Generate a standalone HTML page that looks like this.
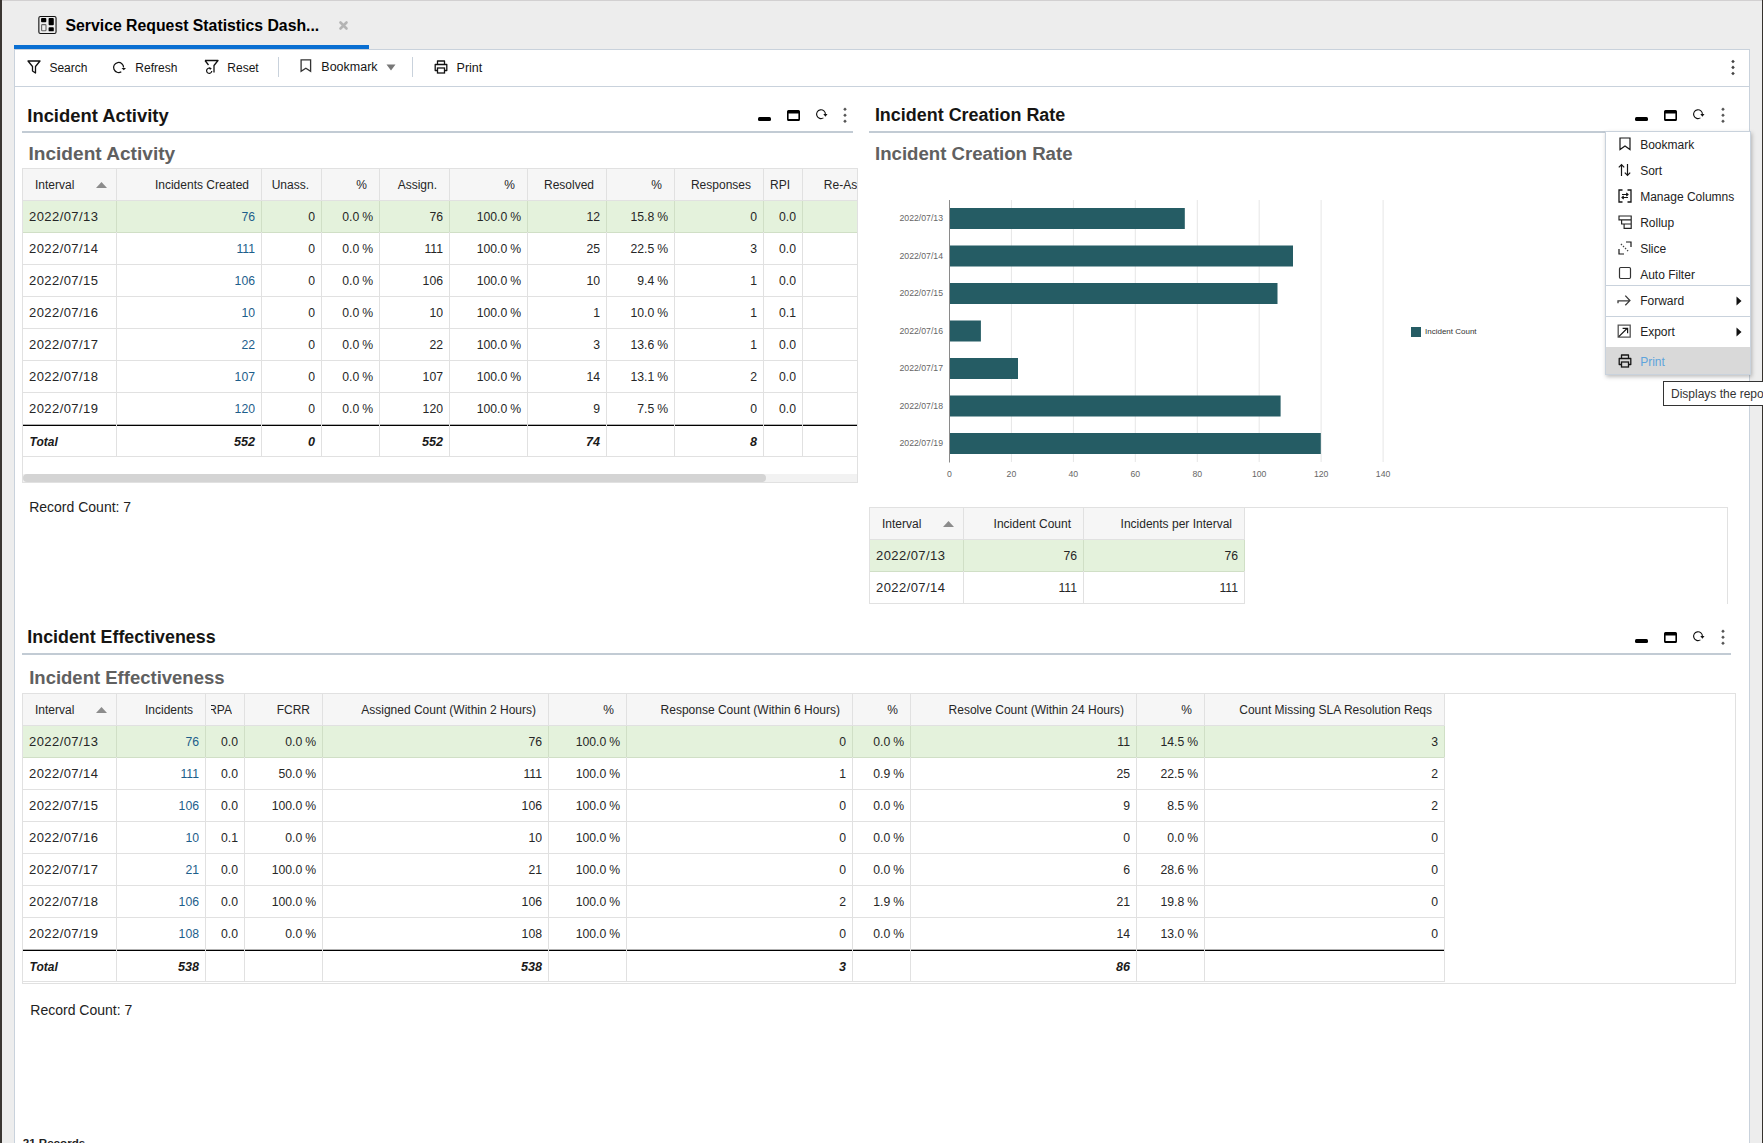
<!DOCTYPE html><html><head><meta charset="utf-8"><title>Service Request Statistics Dashboard</title><style>
html,body{margin:0;padding:0;}body{width:1763px;height:1143px;overflow:hidden;position:relative;background:#ededed;font-family:"Liberation Sans",sans-serif;}
.t{position:absolute;white-space:nowrap;}.r{position:absolute;}svg{position:absolute;overflow:visible;}
</style></head><body>
<div class="r" style="left:0px;top:0px;width:1763px;height:1px;background:#d2d0d1;"></div>
<div class="r" style="left:0px;top:0px;width:2px;height:1143px;background:#3a3632;"></div>
<div class="r" style="left:1762px;top:0px;width:1px;height:1143px;background:#36322e;"></div>
<svg style="left:38px;top:16px" width="20" height="19" viewBox="0 0 20 19"><rect x="0.85" y="0.5" width="17.2" height="17" rx="1.6" fill="none" stroke="#111" stroke-width="1.1"/><rect x="3.05" y="2.1" width="5.25" height="4.1" rx="0.9" fill="#000"/><rect x="10.6" y="2.1" width="5.2" height="7.1" rx="0.9" fill="#000"/><rect x="3.6" y="8.6" width="4.4" height="6.2" rx="0.8" fill="none" stroke="#666" stroke-width="1.1"/><rect x="10.6" y="11.2" width="5.2" height="4.1" rx="0.9" fill="#000"/></svg>
<div class="t" style="left:65.5px;top:16.65px;font-size:15.8px;line-height:18.96px;font-weight:bold;color:#000;font-style:normal;">Service Request Statistics Dash...</div>
<svg style="left:338.5px;top:20.5px" width="9" height="9" viewBox="0 0 9 9"><path d="M1.5 1.5L7.5 7.5M7.5 1.5L1.5 7.5" stroke="#b4b4b4" stroke-width="2.6" stroke-linecap="round"/></svg>
<div class="r" style="left:14px;top:45px;width:355px;height:4px;background:#0a6fd2;"></div>
<div class="r" style="left:14px;top:49px;width:1736px;height:1094px;background:#fff;box-sizing:border-box;border:1px solid #c9d2dc;border-bottom:none;"></div>
<div class="r" style="left:15px;top:86px;width:1734px;height:1px;background:#c9d2dc;"></div>
<svg style="left:27px;top:60px" width="14" height="14" viewBox="0 0 14 14"><path d="M1 1H13L8.5 6.5V13L5.5 11V6.5Z" fill="none" stroke="#111" stroke-width="1.3" stroke-linejoin="round"/></svg>
<div class="t" style="left:49.4px;top:60.54px;font-size:12px;line-height:14.4px;font-weight:normal;color:#161616;font-style:normal;">Search</div>
<svg style="left:108px;top:55px" width="24" height="24" viewBox="0 0 24 24"><path d="M15.6 12.6A5 5 0 1 0 13.3 16.7" fill="none" stroke="#111" stroke-width="1.25"/><path d="M13.5 12.9L18 12.9L15.8 15.3Z" fill="#111"/></svg>
<div class="t" style="left:135.3px;top:60.54px;font-size:12px;line-height:14.4px;font-weight:normal;color:#161616;font-style:normal;">Refresh</div>
<svg style="left:204px;top:59px" width="15" height="15" viewBox="0 0 15 15"><path d="M1 1.5H14L10 6.5V13.5M1 1.5L4.5 6" fill="none" stroke="#111" stroke-width="1.3" stroke-linejoin="round"/><path d="M6.5 9.5A2.6 2.6 0 1 0 7.8 12" fill="none" stroke="#111" stroke-width="1.2"/><path d="M5 8.2L7.8 9.3L6 11Z" fill="#111"/></svg>
<div class="t" style="left:227.3px;top:60.54px;font-size:12px;line-height:14.4px;font-weight:normal;color:#161616;font-style:normal;">Reset</div>
<div class="r" style="left:278px;top:57px;width:1px;height:20px;background:#c9d2dc;"></div>
<svg style="left:300px;top:59px" width="12" height="14" viewBox="0 0 12 14"><path d="M1.1 0.9H10.6V12.4L5.85 9.3L1.1 12.4Z" fill="none" stroke="#333" stroke-width="1.3" stroke-linejoin="miter"/></svg>
<div class="t" style="left:321.3px;top:59.67px;font-size:12.5px;line-height:15.0px;font-weight:normal;color:#161616;font-style:normal;">Bookmark</div>
<svg style="left:386px;top:63.7px" width="10" height="7" viewBox="0 0 10 7"><path d="M0.5 0.5H9.5L5 6.5Z" fill="#777"/></svg>
<div class="r" style="left:412px;top:57px;width:1px;height:20px;background:#c9d2dc;"></div>
<svg style="left:434px;top:60px" width="14" height="14" viewBox="0 0 14 14"><path d="M3.5 4.5V1H10.5V4.5M3.5 10.5H1.2V4.5H12.8V10.5H10.5" fill="none" stroke="#111" stroke-width="1.3" stroke-linejoin="round"/><rect x="3.5" y="8" width="7" height="5" fill="none" stroke="#111" stroke-width="1.3"/></svg>
<div class="t" style="left:456.6px;top:60.77px;font-size:12.5px;line-height:15.0px;font-weight:normal;color:#161616;font-style:normal;">Print</div>
<svg style="left:1730.1px;top:55px" width="6" height="24" viewBox="0 0 6 24"><path d="M3 4.70L4.8 6.50L3 8.30L1.2 6.50ZM3 10.60L4.8 12.40L3 14.20L1.2 12.40ZM3 16.70L4.8 18.50L3 20.30L1.2 18.50Z" fill="#444"/></svg>
<div class="t" style="left:27.3px;top:104.88px;font-size:18.4px;line-height:22.08px;font-weight:bold;color:#161513;font-style:normal;">Incident Activity</div>
<div class="r" style="left:22px;top:131px;width:831px;height:2px;background:#c2cbd4;"></div>
<div class="t" style="left:874.9px;top:105.32px;font-size:17.94px;line-height:21.53px;font-weight:bold;color:#161513;font-style:normal;">Incident Creation Rate</div>
<div class="r" style="left:869px;top:131px;width:862px;height:2px;background:#c2cbd4;"></div>
<div class="t" style="left:27.3px;top:627.42px;font-size:17.83px;line-height:21.4px;font-weight:bold;color:#161513;font-style:normal;">Incident Effectiveness</div>
<div class="r" style="left:22px;top:653px;width:1709px;height:2px;background:#c2cbd4;"></div>
<div class="r" style="left:757.8px;top:117px;width:13px;height:4px;background:#000;border-radius:1.5px;"></div>
<svg style="left:786.7px;top:110px" width="13" height="11" viewBox="0 0 13 11"><rect x="0.8" y="0.9" width="11.4" height="9.2" rx="0.8" fill="none" stroke="#000" stroke-width="1.6"/><rect x="0.5" y="8.9" width="12" height="2" rx="0.8" fill="#000"/><rect x="0.5" y="0.5" width="12" height="3" rx="1" fill="#000"/></svg>
<svg style="left:810.8px;top:103.6px" width="20" height="20" viewBox="0 0 20 20"><path d="M14.4 10.4A4.4 4.4 0 1 0 12.4 13.9" fill="none" stroke="#111" stroke-width="1.1"/><path d="M12.3 10.1L16.5 10.1L14.4 12.7Z" fill="#111"/></svg>
<svg style="left:842px;top:105px" width="6" height="20" viewBox="0 0 6 20"><path d="M3 2.40L4.8 4.20L3 6.00L1.2 4.20ZM3 8.50L4.8 10.30L3 12.10L1.2 10.30ZM3 14.50L4.8 16.30L3 18.10L1.2 16.30Z" fill="#555"/></svg>
<div class="r" style="left:1635.3px;top:117px;width:13px;height:4px;background:#000;border-radius:1.5px;"></div>
<svg style="left:1664.0px;top:110px" width="13" height="11" viewBox="0 0 13 11"><rect x="0.8" y="0.9" width="11.4" height="9.2" rx="0.8" fill="none" stroke="#000" stroke-width="1.6"/><rect x="0.5" y="8.9" width="12" height="2" rx="0.8" fill="#000"/><rect x="0.5" y="0.5" width="12" height="3" rx="1" fill="#000"/></svg>
<svg style="left:1688px;top:103.6px" width="20" height="20" viewBox="0 0 20 20"><path d="M14.4 10.4A4.4 4.4 0 1 0 12.4 13.9" fill="none" stroke="#111" stroke-width="1.1"/><path d="M12.3 10.1L16.5 10.1L14.4 12.7Z" fill="#111"/></svg>
<svg style="left:1720px;top:105px" width="6" height="20" viewBox="0 0 6 20"><path d="M3 2.40L4.8 4.20L3 6.00L1.2 4.20ZM3 8.50L4.8 10.30L3 12.10L1.2 10.30ZM3 14.50L4.8 16.30L3 18.10L1.2 16.30Z" fill="#555"/></svg>
<div class="r" style="left:1635.3px;top:639px;width:13px;height:4px;background:#000;border-radius:1.5px;"></div>
<svg style="left:1664.0px;top:632px" width="13" height="11" viewBox="0 0 13 11"><rect x="0.8" y="0.9" width="11.4" height="9.2" rx="0.8" fill="none" stroke="#000" stroke-width="1.6"/><rect x="0.5" y="8.9" width="12" height="2" rx="0.8" fill="#000"/><rect x="0.5" y="0.5" width="12" height="3" rx="1" fill="#000"/></svg>
<svg style="left:1688px;top:625.6px" width="20" height="20" viewBox="0 0 20 20"><path d="M14.4 10.4A4.4 4.4 0 1 0 12.4 13.9" fill="none" stroke="#111" stroke-width="1.1"/><path d="M12.3 10.1L16.5 10.1L14.4 12.7Z" fill="#111"/></svg>
<svg style="left:1720px;top:627px" width="6" height="20" viewBox="0 0 6 20"><path d="M3 2.40L4.8 4.20L3 6.00L1.2 4.20ZM3 8.50L4.8 10.30L3 12.10L1.2 10.30ZM3 14.50L4.8 16.30L3 18.10L1.2 16.30Z" fill="#555"/></svg>
<div class="t" style="left:28.5px;top:142.84px;font-size:19.08px;line-height:22.9px;font-weight:bold;color:#606060;font-style:normal;">Incident Activity</div>
<div class="t" style="left:875px;top:143.26px;font-size:18.63px;line-height:22.36px;font-weight:bold;color:#606060;font-style:normal;">Incident Creation Rate</div>
<div class="t" style="left:29.2px;top:667.39px;font-size:18.5px;line-height:22.2px;font-weight:bold;color:#606060;font-style:normal;">Incident Effectiveness</div>
<div class="r" style="left:22px;top:168px;width:836px;height:315px;overflow:hidden;">
<div class="r" style="left:0px;top:0px;width:836px;height:32px;background:#f6f6f6;"></div>
<div class="r" style="left:0px;top:0px;width:836px;height:1px;background:#e1e1e1;"></div>
<div class="r" style="left:0px;top:32px;width:836px;height:1px;background:#e1e1e1;"></div>
<div class="r" style="left:0px;top:33px;width:935px;height:31px;background:#e4f2dc;"></div>
<div class="r" style="left:0px;top:64px;width:936px;height:1px;background:#d0dfc6;"></div>
<div class="r" style="left:0px;top:96px;width:936px;height:1px;background:#e1e1e1;"></div>
<div class="r" style="left:0px;top:128px;width:936px;height:1px;background:#e1e1e1;"></div>
<div class="r" style="left:0px;top:160px;width:936px;height:1px;background:#e1e1e1;"></div>
<div class="r" style="left:0px;top:192px;width:936px;height:1px;background:#e1e1e1;"></div>
<div class="r" style="left:0px;top:224px;width:936px;height:1px;background:#e1e1e1;"></div>
<div class="r" style="left:0px;top:256px;width:936px;height:1px;background:rgba(0,0,0,0.3);"></div>
<div class="r" style="left:0px;top:257px;width:936px;height:1px;background:#000;"></div>
<div class="r" style="left:0px;top:288px;width:936px;height:1px;background:#e1e1e1;"></div>
<div class="r" style="left:94px;top:0px;width:1px;height:289px;background:#e1e1e1;"></div>
<div class="r" style="left:239px;top:0px;width:1px;height:289px;background:#e1e1e1;"></div>
<div class="r" style="left:299px;top:0px;width:1px;height:289px;background:#e1e1e1;"></div>
<div class="r" style="left:357px;top:0px;width:1px;height:289px;background:#e1e1e1;"></div>
<div class="r" style="left:427px;top:0px;width:1px;height:289px;background:#e1e1e1;"></div>
<div class="r" style="left:505px;top:0px;width:1px;height:289px;background:#e1e1e1;"></div>
<div class="r" style="left:584px;top:0px;width:1px;height:289px;background:#e1e1e1;"></div>
<div class="r" style="left:652px;top:0px;width:1px;height:289px;background:#e1e1e1;"></div>
<div class="r" style="left:741px;top:0px;width:1px;height:289px;background:#e1e1e1;"></div>
<div class="r" style="left:780px;top:0px;width:1px;height:289px;background:#e1e1e1;"></div>
<div class="r" style="left:935px;top:0px;width:1px;height:289px;background:#e1e1e1;"></div>
<div class="r" style="left:94px;top:33px;width:1px;height:31px;background:#d0dfc6;"></div>
<div class="r" style="left:239px;top:33px;width:1px;height:31px;background:#d0dfc6;"></div>
<div class="r" style="left:299px;top:33px;width:1px;height:31px;background:#d0dfc6;"></div>
<div class="r" style="left:357px;top:33px;width:1px;height:31px;background:#d0dfc6;"></div>
<div class="r" style="left:427px;top:33px;width:1px;height:31px;background:#d0dfc6;"></div>
<div class="r" style="left:505px;top:33px;width:1px;height:31px;background:#d0dfc6;"></div>
<div class="r" style="left:584px;top:33px;width:1px;height:31px;background:#d0dfc6;"></div>
<div class="r" style="left:652px;top:33px;width:1px;height:31px;background:#d0dfc6;"></div>
<div class="r" style="left:741px;top:33px;width:1px;height:31px;background:#d0dfc6;"></div>
<div class="r" style="left:780px;top:33px;width:1px;height:31px;background:#d0dfc6;"></div>
<div class="r" style="left:935px;top:33px;width:1px;height:31px;background:#d0dfc6;"></div>
<div class="r" style="left:0px;top:0px;width:1px;height:315px;background:#e1e1e1;"></div>
<div class="t" style="left:13px;top:10.14px;font-size:12px;line-height:14.4px;font-weight:normal;color:#262626;font-style:normal;">Interval</div>
<div class="t" style="left:-173px;width:400px;text-align:right;top:10.14px;font-size:12px;line-height:14.4px;font-weight:normal;color:#262626;font-style:normal;transform-origin:100% 50%;">Incidents Created</div>
<div class="t" style="left:-113px;width:400px;text-align:right;top:10.14px;font-size:12px;line-height:14.4px;font-weight:normal;color:#262626;font-style:normal;transform-origin:100% 50%;">Unass.</div>
<div class="t" style="left:-55px;width:400px;text-align:right;top:10.14px;font-size:12px;line-height:14.4px;font-weight:normal;color:#262626;font-style:normal;transform-origin:100% 50%;">%</div>
<div class="t" style="left:15px;width:400px;text-align:right;top:10.14px;font-size:12px;line-height:14.4px;font-weight:normal;color:#262626;font-style:normal;transform-origin:100% 50%;">Assign.</div>
<div class="t" style="left:93px;width:400px;text-align:right;top:10.14px;font-size:12px;line-height:14.4px;font-weight:normal;color:#262626;font-style:normal;transform-origin:100% 50%;">%</div>
<div class="t" style="left:172px;width:400px;text-align:right;top:10.14px;font-size:12px;line-height:14.4px;font-weight:normal;color:#262626;font-style:normal;transform-origin:100% 50%;">Resolved</div>
<div class="t" style="left:240px;width:400px;text-align:right;top:10.14px;font-size:12px;line-height:14.4px;font-weight:normal;color:#262626;font-style:normal;transform-origin:100% 50%;">%</div>
<div class="t" style="left:329px;width:400px;text-align:right;top:10.14px;font-size:12px;line-height:14.4px;font-weight:normal;color:#262626;font-style:normal;transform-origin:100% 50%;">Responses</div>
<div class="t" style="left:368px;width:400px;text-align:right;top:10.14px;font-size:12px;line-height:14.4px;font-weight:normal;color:#262626;font-style:normal;transform-origin:100% 50%;">RPI</div>
<div class="t" style="left:801.8px;top:10.14px;font-size:12px;line-height:14.4px;font-weight:normal;color:#262626;font-style:normal;">Re-Assigned</div>
<svg style="left:74px;top:13.8px" width="11" height="6" viewBox="0 0 11 6"><path d="M0 6L5.5 0L11 6Z" fill="#8c8c8c"/></svg>
<div class="t" style="left:7px;top:41.30px;font-size:13px;line-height:15.6px;font-weight:normal;color:#262626;font-style:normal;letter-spacing:0.43px">2022/07/13</div>
<div class="t" style="left:-167px;width:400px;text-align:right;top:41.30px;font-size:13px;line-height:15.6px;font-weight:normal;color:#1d5e8b;font-style:normal;transform-origin:100% 50%;transform:scaleX(0.94)">76</div>
<div class="t" style="left:-107px;width:400px;text-align:right;top:41.30px;font-size:13px;line-height:15.6px;font-weight:normal;color:#262626;font-style:normal;transform-origin:100% 50%;transform:scaleX(0.94)">0</div>
<div class="t" style="left:-49px;width:400px;text-align:right;top:41.30px;font-size:13px;line-height:15.6px;font-weight:normal;color:#262626;font-style:normal;transform-origin:100% 50%;transform:scaleX(0.94)">0.0<span style="margin-left:3px">%</span></div>
<div class="t" style="left:21px;width:400px;text-align:right;top:41.30px;font-size:13px;line-height:15.6px;font-weight:normal;color:#262626;font-style:normal;transform-origin:100% 50%;transform:scaleX(0.94)">76</div>
<div class="t" style="left:99px;width:400px;text-align:right;top:41.30px;font-size:13px;line-height:15.6px;font-weight:normal;color:#262626;font-style:normal;transform-origin:100% 50%;transform:scaleX(0.94)">100.0<span style="margin-left:3px">%</span></div>
<div class="t" style="left:178px;width:400px;text-align:right;top:41.30px;font-size:13px;line-height:15.6px;font-weight:normal;color:#262626;font-style:normal;transform-origin:100% 50%;transform:scaleX(0.94)">12</div>
<div class="t" style="left:246px;width:400px;text-align:right;top:41.30px;font-size:13px;line-height:15.6px;font-weight:normal;color:#262626;font-style:normal;transform-origin:100% 50%;transform:scaleX(0.94)">15.8<span style="margin-left:3px">%</span></div>
<div class="t" style="left:335px;width:400px;text-align:right;top:41.30px;font-size:13px;line-height:15.6px;font-weight:normal;color:#262626;font-style:normal;transform-origin:100% 50%;transform:scaleX(0.94)">0</div>
<div class="t" style="left:374px;width:400px;text-align:right;top:41.30px;font-size:13px;line-height:15.6px;font-weight:normal;color:#262626;font-style:normal;transform-origin:100% 50%;transform:scaleX(0.94)">0.0</div>
<div class="t" style="left:7px;top:73.30px;font-size:13px;line-height:15.6px;font-weight:normal;color:#262626;font-style:normal;letter-spacing:0.43px">2022/07/14</div>
<div class="t" style="left:-167px;width:400px;text-align:right;top:73.30px;font-size:13px;line-height:15.6px;font-weight:normal;color:#1d5e8b;font-style:normal;transform-origin:100% 50%;transform:scaleX(0.94)">111</div>
<div class="t" style="left:-107px;width:400px;text-align:right;top:73.30px;font-size:13px;line-height:15.6px;font-weight:normal;color:#262626;font-style:normal;transform-origin:100% 50%;transform:scaleX(0.94)">0</div>
<div class="t" style="left:-49px;width:400px;text-align:right;top:73.30px;font-size:13px;line-height:15.6px;font-weight:normal;color:#262626;font-style:normal;transform-origin:100% 50%;transform:scaleX(0.94)">0.0<span style="margin-left:3px">%</span></div>
<div class="t" style="left:21px;width:400px;text-align:right;top:73.30px;font-size:13px;line-height:15.6px;font-weight:normal;color:#262626;font-style:normal;transform-origin:100% 50%;transform:scaleX(0.94)">111</div>
<div class="t" style="left:99px;width:400px;text-align:right;top:73.30px;font-size:13px;line-height:15.6px;font-weight:normal;color:#262626;font-style:normal;transform-origin:100% 50%;transform:scaleX(0.94)">100.0<span style="margin-left:3px">%</span></div>
<div class="t" style="left:178px;width:400px;text-align:right;top:73.30px;font-size:13px;line-height:15.6px;font-weight:normal;color:#262626;font-style:normal;transform-origin:100% 50%;transform:scaleX(0.94)">25</div>
<div class="t" style="left:246px;width:400px;text-align:right;top:73.30px;font-size:13px;line-height:15.6px;font-weight:normal;color:#262626;font-style:normal;transform-origin:100% 50%;transform:scaleX(0.94)">22.5<span style="margin-left:3px">%</span></div>
<div class="t" style="left:335px;width:400px;text-align:right;top:73.30px;font-size:13px;line-height:15.6px;font-weight:normal;color:#262626;font-style:normal;transform-origin:100% 50%;transform:scaleX(0.94)">3</div>
<div class="t" style="left:374px;width:400px;text-align:right;top:73.30px;font-size:13px;line-height:15.6px;font-weight:normal;color:#262626;font-style:normal;transform-origin:100% 50%;transform:scaleX(0.94)">0.0</div>
<div class="t" style="left:7px;top:105.30px;font-size:13px;line-height:15.6px;font-weight:normal;color:#262626;font-style:normal;letter-spacing:0.43px">2022/07/15</div>
<div class="t" style="left:-167px;width:400px;text-align:right;top:105.30px;font-size:13px;line-height:15.6px;font-weight:normal;color:#1d5e8b;font-style:normal;transform-origin:100% 50%;transform:scaleX(0.94)">106</div>
<div class="t" style="left:-107px;width:400px;text-align:right;top:105.30px;font-size:13px;line-height:15.6px;font-weight:normal;color:#262626;font-style:normal;transform-origin:100% 50%;transform:scaleX(0.94)">0</div>
<div class="t" style="left:-49px;width:400px;text-align:right;top:105.30px;font-size:13px;line-height:15.6px;font-weight:normal;color:#262626;font-style:normal;transform-origin:100% 50%;transform:scaleX(0.94)">0.0<span style="margin-left:3px">%</span></div>
<div class="t" style="left:21px;width:400px;text-align:right;top:105.30px;font-size:13px;line-height:15.6px;font-weight:normal;color:#262626;font-style:normal;transform-origin:100% 50%;transform:scaleX(0.94)">106</div>
<div class="t" style="left:99px;width:400px;text-align:right;top:105.30px;font-size:13px;line-height:15.6px;font-weight:normal;color:#262626;font-style:normal;transform-origin:100% 50%;transform:scaleX(0.94)">100.0<span style="margin-left:3px">%</span></div>
<div class="t" style="left:178px;width:400px;text-align:right;top:105.30px;font-size:13px;line-height:15.6px;font-weight:normal;color:#262626;font-style:normal;transform-origin:100% 50%;transform:scaleX(0.94)">10</div>
<div class="t" style="left:246px;width:400px;text-align:right;top:105.30px;font-size:13px;line-height:15.6px;font-weight:normal;color:#262626;font-style:normal;transform-origin:100% 50%;transform:scaleX(0.94)">9.4<span style="margin-left:3px">%</span></div>
<div class="t" style="left:335px;width:400px;text-align:right;top:105.30px;font-size:13px;line-height:15.6px;font-weight:normal;color:#262626;font-style:normal;transform-origin:100% 50%;transform:scaleX(0.94)">1</div>
<div class="t" style="left:374px;width:400px;text-align:right;top:105.30px;font-size:13px;line-height:15.6px;font-weight:normal;color:#262626;font-style:normal;transform-origin:100% 50%;transform:scaleX(0.94)">0.0</div>
<div class="t" style="left:7px;top:137.30px;font-size:13px;line-height:15.6px;font-weight:normal;color:#262626;font-style:normal;letter-spacing:0.43px">2022/07/16</div>
<div class="t" style="left:-167px;width:400px;text-align:right;top:137.30px;font-size:13px;line-height:15.6px;font-weight:normal;color:#1d5e8b;font-style:normal;transform-origin:100% 50%;transform:scaleX(0.94)">10</div>
<div class="t" style="left:-107px;width:400px;text-align:right;top:137.30px;font-size:13px;line-height:15.6px;font-weight:normal;color:#262626;font-style:normal;transform-origin:100% 50%;transform:scaleX(0.94)">0</div>
<div class="t" style="left:-49px;width:400px;text-align:right;top:137.30px;font-size:13px;line-height:15.6px;font-weight:normal;color:#262626;font-style:normal;transform-origin:100% 50%;transform:scaleX(0.94)">0.0<span style="margin-left:3px">%</span></div>
<div class="t" style="left:21px;width:400px;text-align:right;top:137.30px;font-size:13px;line-height:15.6px;font-weight:normal;color:#262626;font-style:normal;transform-origin:100% 50%;transform:scaleX(0.94)">10</div>
<div class="t" style="left:99px;width:400px;text-align:right;top:137.30px;font-size:13px;line-height:15.6px;font-weight:normal;color:#262626;font-style:normal;transform-origin:100% 50%;transform:scaleX(0.94)">100.0<span style="margin-left:3px">%</span></div>
<div class="t" style="left:178px;width:400px;text-align:right;top:137.30px;font-size:13px;line-height:15.6px;font-weight:normal;color:#262626;font-style:normal;transform-origin:100% 50%;transform:scaleX(0.94)">1</div>
<div class="t" style="left:246px;width:400px;text-align:right;top:137.30px;font-size:13px;line-height:15.6px;font-weight:normal;color:#262626;font-style:normal;transform-origin:100% 50%;transform:scaleX(0.94)">10.0<span style="margin-left:3px">%</span></div>
<div class="t" style="left:335px;width:400px;text-align:right;top:137.30px;font-size:13px;line-height:15.6px;font-weight:normal;color:#262626;font-style:normal;transform-origin:100% 50%;transform:scaleX(0.94)">1</div>
<div class="t" style="left:374px;width:400px;text-align:right;top:137.30px;font-size:13px;line-height:15.6px;font-weight:normal;color:#262626;font-style:normal;transform-origin:100% 50%;transform:scaleX(0.94)">0.1</div>
<div class="t" style="left:7px;top:169.30px;font-size:13px;line-height:15.6px;font-weight:normal;color:#262626;font-style:normal;letter-spacing:0.43px">2022/07/17</div>
<div class="t" style="left:-167px;width:400px;text-align:right;top:169.30px;font-size:13px;line-height:15.6px;font-weight:normal;color:#1d5e8b;font-style:normal;transform-origin:100% 50%;transform:scaleX(0.94)">22</div>
<div class="t" style="left:-107px;width:400px;text-align:right;top:169.30px;font-size:13px;line-height:15.6px;font-weight:normal;color:#262626;font-style:normal;transform-origin:100% 50%;transform:scaleX(0.94)">0</div>
<div class="t" style="left:-49px;width:400px;text-align:right;top:169.30px;font-size:13px;line-height:15.6px;font-weight:normal;color:#262626;font-style:normal;transform-origin:100% 50%;transform:scaleX(0.94)">0.0<span style="margin-left:3px">%</span></div>
<div class="t" style="left:21px;width:400px;text-align:right;top:169.30px;font-size:13px;line-height:15.6px;font-weight:normal;color:#262626;font-style:normal;transform-origin:100% 50%;transform:scaleX(0.94)">22</div>
<div class="t" style="left:99px;width:400px;text-align:right;top:169.30px;font-size:13px;line-height:15.6px;font-weight:normal;color:#262626;font-style:normal;transform-origin:100% 50%;transform:scaleX(0.94)">100.0<span style="margin-left:3px">%</span></div>
<div class="t" style="left:178px;width:400px;text-align:right;top:169.30px;font-size:13px;line-height:15.6px;font-weight:normal;color:#262626;font-style:normal;transform-origin:100% 50%;transform:scaleX(0.94)">3</div>
<div class="t" style="left:246px;width:400px;text-align:right;top:169.30px;font-size:13px;line-height:15.6px;font-weight:normal;color:#262626;font-style:normal;transform-origin:100% 50%;transform:scaleX(0.94)">13.6<span style="margin-left:3px">%</span></div>
<div class="t" style="left:335px;width:400px;text-align:right;top:169.30px;font-size:13px;line-height:15.6px;font-weight:normal;color:#262626;font-style:normal;transform-origin:100% 50%;transform:scaleX(0.94)">1</div>
<div class="t" style="left:374px;width:400px;text-align:right;top:169.30px;font-size:13px;line-height:15.6px;font-weight:normal;color:#262626;font-style:normal;transform-origin:100% 50%;transform:scaleX(0.94)">0.0</div>
<div class="t" style="left:7px;top:201.30px;font-size:13px;line-height:15.6px;font-weight:normal;color:#262626;font-style:normal;letter-spacing:0.43px">2022/07/18</div>
<div class="t" style="left:-167px;width:400px;text-align:right;top:201.30px;font-size:13px;line-height:15.6px;font-weight:normal;color:#1d5e8b;font-style:normal;transform-origin:100% 50%;transform:scaleX(0.94)">107</div>
<div class="t" style="left:-107px;width:400px;text-align:right;top:201.30px;font-size:13px;line-height:15.6px;font-weight:normal;color:#262626;font-style:normal;transform-origin:100% 50%;transform:scaleX(0.94)">0</div>
<div class="t" style="left:-49px;width:400px;text-align:right;top:201.30px;font-size:13px;line-height:15.6px;font-weight:normal;color:#262626;font-style:normal;transform-origin:100% 50%;transform:scaleX(0.94)">0.0<span style="margin-left:3px">%</span></div>
<div class="t" style="left:21px;width:400px;text-align:right;top:201.30px;font-size:13px;line-height:15.6px;font-weight:normal;color:#262626;font-style:normal;transform-origin:100% 50%;transform:scaleX(0.94)">107</div>
<div class="t" style="left:99px;width:400px;text-align:right;top:201.30px;font-size:13px;line-height:15.6px;font-weight:normal;color:#262626;font-style:normal;transform-origin:100% 50%;transform:scaleX(0.94)">100.0<span style="margin-left:3px">%</span></div>
<div class="t" style="left:178px;width:400px;text-align:right;top:201.30px;font-size:13px;line-height:15.6px;font-weight:normal;color:#262626;font-style:normal;transform-origin:100% 50%;transform:scaleX(0.94)">14</div>
<div class="t" style="left:246px;width:400px;text-align:right;top:201.30px;font-size:13px;line-height:15.6px;font-weight:normal;color:#262626;font-style:normal;transform-origin:100% 50%;transform:scaleX(0.94)">13.1<span style="margin-left:3px">%</span></div>
<div class="t" style="left:335px;width:400px;text-align:right;top:201.30px;font-size:13px;line-height:15.6px;font-weight:normal;color:#262626;font-style:normal;transform-origin:100% 50%;transform:scaleX(0.94)">2</div>
<div class="t" style="left:374px;width:400px;text-align:right;top:201.30px;font-size:13px;line-height:15.6px;font-weight:normal;color:#262626;font-style:normal;transform-origin:100% 50%;transform:scaleX(0.94)">0.0</div>
<div class="t" style="left:7px;top:233.30px;font-size:13px;line-height:15.6px;font-weight:normal;color:#262626;font-style:normal;letter-spacing:0.43px">2022/07/19</div>
<div class="t" style="left:-167px;width:400px;text-align:right;top:233.30px;font-size:13px;line-height:15.6px;font-weight:normal;color:#1d5e8b;font-style:normal;transform-origin:100% 50%;transform:scaleX(0.94)">120</div>
<div class="t" style="left:-107px;width:400px;text-align:right;top:233.30px;font-size:13px;line-height:15.6px;font-weight:normal;color:#262626;font-style:normal;transform-origin:100% 50%;transform:scaleX(0.94)">0</div>
<div class="t" style="left:-49px;width:400px;text-align:right;top:233.30px;font-size:13px;line-height:15.6px;font-weight:normal;color:#262626;font-style:normal;transform-origin:100% 50%;transform:scaleX(0.94)">0.0<span style="margin-left:3px">%</span></div>
<div class="t" style="left:21px;width:400px;text-align:right;top:233.30px;font-size:13px;line-height:15.6px;font-weight:normal;color:#262626;font-style:normal;transform-origin:100% 50%;transform:scaleX(0.94)">120</div>
<div class="t" style="left:99px;width:400px;text-align:right;top:233.30px;font-size:13px;line-height:15.6px;font-weight:normal;color:#262626;font-style:normal;transform-origin:100% 50%;transform:scaleX(0.94)">100.0<span style="margin-left:3px">%</span></div>
<div class="t" style="left:178px;width:400px;text-align:right;top:233.30px;font-size:13px;line-height:15.6px;font-weight:normal;color:#262626;font-style:normal;transform-origin:100% 50%;transform:scaleX(0.94)">9</div>
<div class="t" style="left:246px;width:400px;text-align:right;top:233.30px;font-size:13px;line-height:15.6px;font-weight:normal;color:#262626;font-style:normal;transform-origin:100% 50%;transform:scaleX(0.94)">7.5<span style="margin-left:3px">%</span></div>
<div class="t" style="left:335px;width:400px;text-align:right;top:233.30px;font-size:13px;line-height:15.6px;font-weight:normal;color:#262626;font-style:normal;transform-origin:100% 50%;transform:scaleX(0.94)">0</div>
<div class="t" style="left:374px;width:400px;text-align:right;top:233.30px;font-size:13px;line-height:15.6px;font-weight:normal;color:#262626;font-style:normal;transform-origin:100% 50%;transform:scaleX(0.94)">0.0</div>
<div class="t" style="left:7.5px;top:267.24px;font-size:12px;line-height:14.4px;font-weight:bold;color:#1a1a1a;font-style:italic;">Total</div>
<div class="t" style="left:-167px;width:400px;text-align:right;top:266.67px;font-size:12.6px;line-height:15.12px;font-weight:bold;color:#1a1a1a;font-style:italic;transform-origin:100% 50%;">552</div>
<div class="t" style="left:-107px;width:400px;text-align:right;top:266.67px;font-size:12.6px;line-height:15.12px;font-weight:bold;color:#1a1a1a;font-style:italic;transform-origin:100% 50%;">0</div>
<div class="t" style="left:21px;width:400px;text-align:right;top:266.67px;font-size:12.6px;line-height:15.12px;font-weight:bold;color:#1a1a1a;font-style:italic;transform-origin:100% 50%;">552</div>
<div class="t" style="left:178px;width:400px;text-align:right;top:266.67px;font-size:12.6px;line-height:15.12px;font-weight:bold;color:#1a1a1a;font-style:italic;transform-origin:100% 50%;">74</div>
<div class="t" style="left:335px;width:400px;text-align:right;top:266.67px;font-size:12.6px;line-height:15.12px;font-weight:bold;color:#1a1a1a;font-style:italic;transform-origin:100% 50%;">8</div>
<div class="r" style="left:1px;top:306px;width:834px;height:8px;background:#f2f2f2;"></div>
<div class="r" style="left:1px;top:306px;width:743px;height:8px;background:#d4d4d4;border-radius:4px;"></div>
</div>
<div class="r" style="left:857px;top:168px;width:1px;height:315px;background:#e1e1e1;"></div>
<div class="r" style="left:22px;top:482px;width:836px;height:1px;background:#e1e1e1;"></div>
<div class="t" style="left:29.2px;top:498.95px;font-size:14px;line-height:16.8px;font-weight:normal;color:#222;font-style:normal;">Record Count: 7</div>
<div class="r" style="left:22px;top:693px;width:1714px;height:291px;overflow:hidden;">
<div class="r" style="left:0px;top:0px;width:1423px;height:32px;background:#f6f6f6;"></div>
<div class="r" style="left:0px;top:0px;width:1714px;height:1px;background:#e1e1e1;"></div>
<div class="r" style="left:0px;top:32px;width:1423px;height:1px;background:#e1e1e1;"></div>
<div class="r" style="left:0px;top:33px;width:1422px;height:31px;background:#e4f2dc;"></div>
<div class="r" style="left:0px;top:64px;width:1423px;height:1px;background:#d0dfc6;"></div>
<div class="r" style="left:0px;top:96px;width:1423px;height:1px;background:#e1e1e1;"></div>
<div class="r" style="left:0px;top:128px;width:1423px;height:1px;background:#e1e1e1;"></div>
<div class="r" style="left:0px;top:160px;width:1423px;height:1px;background:#e1e1e1;"></div>
<div class="r" style="left:0px;top:192px;width:1423px;height:1px;background:#e1e1e1;"></div>
<div class="r" style="left:0px;top:224px;width:1423px;height:1px;background:#e1e1e1;"></div>
<div class="r" style="left:0px;top:256px;width:1423px;height:1px;background:rgba(0,0,0,0.3);"></div>
<div class="r" style="left:0px;top:257px;width:1423px;height:1px;background:#000;"></div>
<div class="r" style="left:0px;top:288px;width:1423px;height:1px;background:#e1e1e1;"></div>
<div class="r" style="left:94px;top:0px;width:1px;height:289px;background:#e1e1e1;"></div>
<div class="r" style="left:183px;top:0px;width:1px;height:289px;background:#e1e1e1;"></div>
<div class="r" style="left:222px;top:0px;width:1px;height:289px;background:#e1e1e1;"></div>
<div class="r" style="left:300px;top:0px;width:1px;height:289px;background:#e1e1e1;"></div>
<div class="r" style="left:526px;top:0px;width:1px;height:289px;background:#e1e1e1;"></div>
<div class="r" style="left:604px;top:0px;width:1px;height:289px;background:#e1e1e1;"></div>
<div class="r" style="left:830px;top:0px;width:1px;height:289px;background:#e1e1e1;"></div>
<div class="r" style="left:888px;top:0px;width:1px;height:289px;background:#e1e1e1;"></div>
<div class="r" style="left:1114px;top:0px;width:1px;height:289px;background:#e1e1e1;"></div>
<div class="r" style="left:1182px;top:0px;width:1px;height:289px;background:#e1e1e1;"></div>
<div class="r" style="left:1422px;top:0px;width:1px;height:289px;background:#e1e1e1;"></div>
<div class="r" style="left:94px;top:33px;width:1px;height:31px;background:#d0dfc6;"></div>
<div class="r" style="left:183px;top:33px;width:1px;height:31px;background:#d0dfc6;"></div>
<div class="r" style="left:222px;top:33px;width:1px;height:31px;background:#d0dfc6;"></div>
<div class="r" style="left:300px;top:33px;width:1px;height:31px;background:#d0dfc6;"></div>
<div class="r" style="left:526px;top:33px;width:1px;height:31px;background:#d0dfc6;"></div>
<div class="r" style="left:604px;top:33px;width:1px;height:31px;background:#d0dfc6;"></div>
<div class="r" style="left:830px;top:33px;width:1px;height:31px;background:#d0dfc6;"></div>
<div class="r" style="left:888px;top:33px;width:1px;height:31px;background:#d0dfc6;"></div>
<div class="r" style="left:1114px;top:33px;width:1px;height:31px;background:#d0dfc6;"></div>
<div class="r" style="left:1182px;top:33px;width:1px;height:31px;background:#d0dfc6;"></div>
<div class="r" style="left:1422px;top:33px;width:1px;height:31px;background:#d0dfc6;"></div>
<div class="r" style="left:0px;top:0px;width:1px;height:291px;background:#e1e1e1;"></div>
<div class="t" style="left:13px;top:10.14px;font-size:12px;line-height:14.4px;font-weight:normal;color:#262626;font-style:normal;">Interval</div>
<div class="t" style="left:-229px;width:400px;text-align:right;top:10.14px;font-size:12px;line-height:14.4px;font-weight:normal;color:#262626;font-style:normal;transform-origin:100% 50%;">Incidents</div>
<div class="r" style="left:189px;top:0;width:21px;height:32px;overflow:hidden;">
<div class="t" style="left:-379px;width:400px;text-align:right;top:10.14px;font-size:12px;line-height:14.4px;font-weight:normal;color:#262626;font-style:normal;transform-origin:100% 50%;">RPA</div>
</div>
<div class="t" style="left:-112px;width:400px;text-align:right;top:10.14px;font-size:12px;line-height:14.4px;font-weight:normal;color:#262626;font-style:normal;transform-origin:100% 50%;">FCRR</div>
<div class="t" style="left:114px;width:400px;text-align:right;top:10.14px;font-size:12px;line-height:14.4px;font-weight:normal;color:#262626;font-style:normal;transform-origin:100% 50%;">Assigned Count (Within 2 Hours)</div>
<div class="t" style="left:192px;width:400px;text-align:right;top:10.14px;font-size:12px;line-height:14.4px;font-weight:normal;color:#262626;font-style:normal;transform-origin:100% 50%;">%</div>
<div class="t" style="left:418px;width:400px;text-align:right;top:10.14px;font-size:12px;line-height:14.4px;font-weight:normal;color:#262626;font-style:normal;transform-origin:100% 50%;">Response Count (Within 6 Hours)</div>
<div class="t" style="left:476px;width:400px;text-align:right;top:10.14px;font-size:12px;line-height:14.4px;font-weight:normal;color:#262626;font-style:normal;transform-origin:100% 50%;">%</div>
<div class="t" style="left:702px;width:400px;text-align:right;top:10.14px;font-size:12px;line-height:14.4px;font-weight:normal;color:#262626;font-style:normal;transform-origin:100% 50%;">Resolve Count (Within 24 Hours)</div>
<div class="t" style="left:770px;width:400px;text-align:right;top:10.14px;font-size:12px;line-height:14.4px;font-weight:normal;color:#262626;font-style:normal;transform-origin:100% 50%;">%</div>
<div class="t" style="left:1010px;width:400px;text-align:right;top:10.14px;font-size:12px;line-height:14.4px;font-weight:normal;color:#262626;font-style:normal;transform-origin:100% 50%;">Count Missing SLA Resolution Reqs</div>
<svg style="left:74px;top:13.8px" width="11" height="6" viewBox="0 0 11 6"><path d="M0 6L5.5 0L11 6Z" fill="#8c8c8c"/></svg>
<div class="t" style="left:7px;top:41.30px;font-size:13px;line-height:15.6px;font-weight:normal;color:#262626;font-style:normal;letter-spacing:0.43px">2022/07/13</div>
<div class="t" style="left:-223px;width:400px;text-align:right;top:41.30px;font-size:13px;line-height:15.6px;font-weight:normal;color:#1d5e8b;font-style:normal;transform-origin:100% 50%;transform:scaleX(0.94)">76</div>
<div class="t" style="left:-184px;width:400px;text-align:right;top:41.30px;font-size:13px;line-height:15.6px;font-weight:normal;color:#262626;font-style:normal;transform-origin:100% 50%;transform:scaleX(0.94)">0.0</div>
<div class="t" style="left:-106px;width:400px;text-align:right;top:41.30px;font-size:13px;line-height:15.6px;font-weight:normal;color:#262626;font-style:normal;transform-origin:100% 50%;transform:scaleX(0.94)">0.0<span style="margin-left:3px">%</span></div>
<div class="t" style="left:120px;width:400px;text-align:right;top:41.30px;font-size:13px;line-height:15.6px;font-weight:normal;color:#262626;font-style:normal;transform-origin:100% 50%;transform:scaleX(0.94)">76</div>
<div class="t" style="left:198px;width:400px;text-align:right;top:41.30px;font-size:13px;line-height:15.6px;font-weight:normal;color:#262626;font-style:normal;transform-origin:100% 50%;transform:scaleX(0.94)">100.0<span style="margin-left:3px">%</span></div>
<div class="t" style="left:424px;width:400px;text-align:right;top:41.30px;font-size:13px;line-height:15.6px;font-weight:normal;color:#262626;font-style:normal;transform-origin:100% 50%;transform:scaleX(0.94)">0</div>
<div class="t" style="left:482px;width:400px;text-align:right;top:41.30px;font-size:13px;line-height:15.6px;font-weight:normal;color:#262626;font-style:normal;transform-origin:100% 50%;transform:scaleX(0.94)">0.0<span style="margin-left:3px">%</span></div>
<div class="t" style="left:708px;width:400px;text-align:right;top:41.30px;font-size:13px;line-height:15.6px;font-weight:normal;color:#262626;font-style:normal;transform-origin:100% 50%;transform:scaleX(0.94)">11</div>
<div class="t" style="left:776px;width:400px;text-align:right;top:41.30px;font-size:13px;line-height:15.6px;font-weight:normal;color:#262626;font-style:normal;transform-origin:100% 50%;transform:scaleX(0.94)">14.5<span style="margin-left:3px">%</span></div>
<div class="t" style="left:1016px;width:400px;text-align:right;top:41.30px;font-size:13px;line-height:15.6px;font-weight:normal;color:#262626;font-style:normal;transform-origin:100% 50%;transform:scaleX(0.94)">3</div>
<div class="t" style="left:7px;top:73.30px;font-size:13px;line-height:15.6px;font-weight:normal;color:#262626;font-style:normal;letter-spacing:0.43px">2022/07/14</div>
<div class="t" style="left:-223px;width:400px;text-align:right;top:73.30px;font-size:13px;line-height:15.6px;font-weight:normal;color:#1d5e8b;font-style:normal;transform-origin:100% 50%;transform:scaleX(0.94)">111</div>
<div class="t" style="left:-184px;width:400px;text-align:right;top:73.30px;font-size:13px;line-height:15.6px;font-weight:normal;color:#262626;font-style:normal;transform-origin:100% 50%;transform:scaleX(0.94)">0.0</div>
<div class="t" style="left:-106px;width:400px;text-align:right;top:73.30px;font-size:13px;line-height:15.6px;font-weight:normal;color:#262626;font-style:normal;transform-origin:100% 50%;transform:scaleX(0.94)">50.0<span style="margin-left:3px">%</span></div>
<div class="t" style="left:120px;width:400px;text-align:right;top:73.30px;font-size:13px;line-height:15.6px;font-weight:normal;color:#262626;font-style:normal;transform-origin:100% 50%;transform:scaleX(0.94)">111</div>
<div class="t" style="left:198px;width:400px;text-align:right;top:73.30px;font-size:13px;line-height:15.6px;font-weight:normal;color:#262626;font-style:normal;transform-origin:100% 50%;transform:scaleX(0.94)">100.0<span style="margin-left:3px">%</span></div>
<div class="t" style="left:424px;width:400px;text-align:right;top:73.30px;font-size:13px;line-height:15.6px;font-weight:normal;color:#262626;font-style:normal;transform-origin:100% 50%;transform:scaleX(0.94)">1</div>
<div class="t" style="left:482px;width:400px;text-align:right;top:73.30px;font-size:13px;line-height:15.6px;font-weight:normal;color:#262626;font-style:normal;transform-origin:100% 50%;transform:scaleX(0.94)">0.9<span style="margin-left:3px">%</span></div>
<div class="t" style="left:708px;width:400px;text-align:right;top:73.30px;font-size:13px;line-height:15.6px;font-weight:normal;color:#262626;font-style:normal;transform-origin:100% 50%;transform:scaleX(0.94)">25</div>
<div class="t" style="left:776px;width:400px;text-align:right;top:73.30px;font-size:13px;line-height:15.6px;font-weight:normal;color:#262626;font-style:normal;transform-origin:100% 50%;transform:scaleX(0.94)">22.5<span style="margin-left:3px">%</span></div>
<div class="t" style="left:1016px;width:400px;text-align:right;top:73.30px;font-size:13px;line-height:15.6px;font-weight:normal;color:#262626;font-style:normal;transform-origin:100% 50%;transform:scaleX(0.94)">2</div>
<div class="t" style="left:7px;top:105.30px;font-size:13px;line-height:15.6px;font-weight:normal;color:#262626;font-style:normal;letter-spacing:0.43px">2022/07/15</div>
<div class="t" style="left:-223px;width:400px;text-align:right;top:105.30px;font-size:13px;line-height:15.6px;font-weight:normal;color:#1d5e8b;font-style:normal;transform-origin:100% 50%;transform:scaleX(0.94)">106</div>
<div class="t" style="left:-184px;width:400px;text-align:right;top:105.30px;font-size:13px;line-height:15.6px;font-weight:normal;color:#262626;font-style:normal;transform-origin:100% 50%;transform:scaleX(0.94)">0.0</div>
<div class="t" style="left:-106px;width:400px;text-align:right;top:105.30px;font-size:13px;line-height:15.6px;font-weight:normal;color:#262626;font-style:normal;transform-origin:100% 50%;transform:scaleX(0.94)">100.0<span style="margin-left:3px">%</span></div>
<div class="t" style="left:120px;width:400px;text-align:right;top:105.30px;font-size:13px;line-height:15.6px;font-weight:normal;color:#262626;font-style:normal;transform-origin:100% 50%;transform:scaleX(0.94)">106</div>
<div class="t" style="left:198px;width:400px;text-align:right;top:105.30px;font-size:13px;line-height:15.6px;font-weight:normal;color:#262626;font-style:normal;transform-origin:100% 50%;transform:scaleX(0.94)">100.0<span style="margin-left:3px">%</span></div>
<div class="t" style="left:424px;width:400px;text-align:right;top:105.30px;font-size:13px;line-height:15.6px;font-weight:normal;color:#262626;font-style:normal;transform-origin:100% 50%;transform:scaleX(0.94)">0</div>
<div class="t" style="left:482px;width:400px;text-align:right;top:105.30px;font-size:13px;line-height:15.6px;font-weight:normal;color:#262626;font-style:normal;transform-origin:100% 50%;transform:scaleX(0.94)">0.0<span style="margin-left:3px">%</span></div>
<div class="t" style="left:708px;width:400px;text-align:right;top:105.30px;font-size:13px;line-height:15.6px;font-weight:normal;color:#262626;font-style:normal;transform-origin:100% 50%;transform:scaleX(0.94)">9</div>
<div class="t" style="left:776px;width:400px;text-align:right;top:105.30px;font-size:13px;line-height:15.6px;font-weight:normal;color:#262626;font-style:normal;transform-origin:100% 50%;transform:scaleX(0.94)">8.5<span style="margin-left:3px">%</span></div>
<div class="t" style="left:1016px;width:400px;text-align:right;top:105.30px;font-size:13px;line-height:15.6px;font-weight:normal;color:#262626;font-style:normal;transform-origin:100% 50%;transform:scaleX(0.94)">2</div>
<div class="t" style="left:7px;top:137.30px;font-size:13px;line-height:15.6px;font-weight:normal;color:#262626;font-style:normal;letter-spacing:0.43px">2022/07/16</div>
<div class="t" style="left:-223px;width:400px;text-align:right;top:137.30px;font-size:13px;line-height:15.6px;font-weight:normal;color:#1d5e8b;font-style:normal;transform-origin:100% 50%;transform:scaleX(0.94)">10</div>
<div class="t" style="left:-184px;width:400px;text-align:right;top:137.30px;font-size:13px;line-height:15.6px;font-weight:normal;color:#262626;font-style:normal;transform-origin:100% 50%;transform:scaleX(0.94)">0.1</div>
<div class="t" style="left:-106px;width:400px;text-align:right;top:137.30px;font-size:13px;line-height:15.6px;font-weight:normal;color:#262626;font-style:normal;transform-origin:100% 50%;transform:scaleX(0.94)">0.0<span style="margin-left:3px">%</span></div>
<div class="t" style="left:120px;width:400px;text-align:right;top:137.30px;font-size:13px;line-height:15.6px;font-weight:normal;color:#262626;font-style:normal;transform-origin:100% 50%;transform:scaleX(0.94)">10</div>
<div class="t" style="left:198px;width:400px;text-align:right;top:137.30px;font-size:13px;line-height:15.6px;font-weight:normal;color:#262626;font-style:normal;transform-origin:100% 50%;transform:scaleX(0.94)">100.0<span style="margin-left:3px">%</span></div>
<div class="t" style="left:424px;width:400px;text-align:right;top:137.30px;font-size:13px;line-height:15.6px;font-weight:normal;color:#262626;font-style:normal;transform-origin:100% 50%;transform:scaleX(0.94)">0</div>
<div class="t" style="left:482px;width:400px;text-align:right;top:137.30px;font-size:13px;line-height:15.6px;font-weight:normal;color:#262626;font-style:normal;transform-origin:100% 50%;transform:scaleX(0.94)">0.0<span style="margin-left:3px">%</span></div>
<div class="t" style="left:708px;width:400px;text-align:right;top:137.30px;font-size:13px;line-height:15.6px;font-weight:normal;color:#262626;font-style:normal;transform-origin:100% 50%;transform:scaleX(0.94)">0</div>
<div class="t" style="left:776px;width:400px;text-align:right;top:137.30px;font-size:13px;line-height:15.6px;font-weight:normal;color:#262626;font-style:normal;transform-origin:100% 50%;transform:scaleX(0.94)">0.0<span style="margin-left:3px">%</span></div>
<div class="t" style="left:1016px;width:400px;text-align:right;top:137.30px;font-size:13px;line-height:15.6px;font-weight:normal;color:#262626;font-style:normal;transform-origin:100% 50%;transform:scaleX(0.94)">0</div>
<div class="t" style="left:7px;top:169.30px;font-size:13px;line-height:15.6px;font-weight:normal;color:#262626;font-style:normal;letter-spacing:0.43px">2022/07/17</div>
<div class="t" style="left:-223px;width:400px;text-align:right;top:169.30px;font-size:13px;line-height:15.6px;font-weight:normal;color:#1d5e8b;font-style:normal;transform-origin:100% 50%;transform:scaleX(0.94)">21</div>
<div class="t" style="left:-184px;width:400px;text-align:right;top:169.30px;font-size:13px;line-height:15.6px;font-weight:normal;color:#262626;font-style:normal;transform-origin:100% 50%;transform:scaleX(0.94)">0.0</div>
<div class="t" style="left:-106px;width:400px;text-align:right;top:169.30px;font-size:13px;line-height:15.6px;font-weight:normal;color:#262626;font-style:normal;transform-origin:100% 50%;transform:scaleX(0.94)">100.0<span style="margin-left:3px">%</span></div>
<div class="t" style="left:120px;width:400px;text-align:right;top:169.30px;font-size:13px;line-height:15.6px;font-weight:normal;color:#262626;font-style:normal;transform-origin:100% 50%;transform:scaleX(0.94)">21</div>
<div class="t" style="left:198px;width:400px;text-align:right;top:169.30px;font-size:13px;line-height:15.6px;font-weight:normal;color:#262626;font-style:normal;transform-origin:100% 50%;transform:scaleX(0.94)">100.0<span style="margin-left:3px">%</span></div>
<div class="t" style="left:424px;width:400px;text-align:right;top:169.30px;font-size:13px;line-height:15.6px;font-weight:normal;color:#262626;font-style:normal;transform-origin:100% 50%;transform:scaleX(0.94)">0</div>
<div class="t" style="left:482px;width:400px;text-align:right;top:169.30px;font-size:13px;line-height:15.6px;font-weight:normal;color:#262626;font-style:normal;transform-origin:100% 50%;transform:scaleX(0.94)">0.0<span style="margin-left:3px">%</span></div>
<div class="t" style="left:708px;width:400px;text-align:right;top:169.30px;font-size:13px;line-height:15.6px;font-weight:normal;color:#262626;font-style:normal;transform-origin:100% 50%;transform:scaleX(0.94)">6</div>
<div class="t" style="left:776px;width:400px;text-align:right;top:169.30px;font-size:13px;line-height:15.6px;font-weight:normal;color:#262626;font-style:normal;transform-origin:100% 50%;transform:scaleX(0.94)">28.6<span style="margin-left:3px">%</span></div>
<div class="t" style="left:1016px;width:400px;text-align:right;top:169.30px;font-size:13px;line-height:15.6px;font-weight:normal;color:#262626;font-style:normal;transform-origin:100% 50%;transform:scaleX(0.94)">0</div>
<div class="t" style="left:7px;top:201.30px;font-size:13px;line-height:15.6px;font-weight:normal;color:#262626;font-style:normal;letter-spacing:0.43px">2022/07/18</div>
<div class="t" style="left:-223px;width:400px;text-align:right;top:201.30px;font-size:13px;line-height:15.6px;font-weight:normal;color:#1d5e8b;font-style:normal;transform-origin:100% 50%;transform:scaleX(0.94)">106</div>
<div class="t" style="left:-184px;width:400px;text-align:right;top:201.30px;font-size:13px;line-height:15.6px;font-weight:normal;color:#262626;font-style:normal;transform-origin:100% 50%;transform:scaleX(0.94)">0.0</div>
<div class="t" style="left:-106px;width:400px;text-align:right;top:201.30px;font-size:13px;line-height:15.6px;font-weight:normal;color:#262626;font-style:normal;transform-origin:100% 50%;transform:scaleX(0.94)">100.0<span style="margin-left:3px">%</span></div>
<div class="t" style="left:120px;width:400px;text-align:right;top:201.30px;font-size:13px;line-height:15.6px;font-weight:normal;color:#262626;font-style:normal;transform-origin:100% 50%;transform:scaleX(0.94)">106</div>
<div class="t" style="left:198px;width:400px;text-align:right;top:201.30px;font-size:13px;line-height:15.6px;font-weight:normal;color:#262626;font-style:normal;transform-origin:100% 50%;transform:scaleX(0.94)">100.0<span style="margin-left:3px">%</span></div>
<div class="t" style="left:424px;width:400px;text-align:right;top:201.30px;font-size:13px;line-height:15.6px;font-weight:normal;color:#262626;font-style:normal;transform-origin:100% 50%;transform:scaleX(0.94)">2</div>
<div class="t" style="left:482px;width:400px;text-align:right;top:201.30px;font-size:13px;line-height:15.6px;font-weight:normal;color:#262626;font-style:normal;transform-origin:100% 50%;transform:scaleX(0.94)">1.9<span style="margin-left:3px">%</span></div>
<div class="t" style="left:708px;width:400px;text-align:right;top:201.30px;font-size:13px;line-height:15.6px;font-weight:normal;color:#262626;font-style:normal;transform-origin:100% 50%;transform:scaleX(0.94)">21</div>
<div class="t" style="left:776px;width:400px;text-align:right;top:201.30px;font-size:13px;line-height:15.6px;font-weight:normal;color:#262626;font-style:normal;transform-origin:100% 50%;transform:scaleX(0.94)">19.8<span style="margin-left:3px">%</span></div>
<div class="t" style="left:1016px;width:400px;text-align:right;top:201.30px;font-size:13px;line-height:15.6px;font-weight:normal;color:#262626;font-style:normal;transform-origin:100% 50%;transform:scaleX(0.94)">0</div>
<div class="t" style="left:7px;top:233.30px;font-size:13px;line-height:15.6px;font-weight:normal;color:#262626;font-style:normal;letter-spacing:0.43px">2022/07/19</div>
<div class="t" style="left:-223px;width:400px;text-align:right;top:233.30px;font-size:13px;line-height:15.6px;font-weight:normal;color:#1d5e8b;font-style:normal;transform-origin:100% 50%;transform:scaleX(0.94)">108</div>
<div class="t" style="left:-184px;width:400px;text-align:right;top:233.30px;font-size:13px;line-height:15.6px;font-weight:normal;color:#262626;font-style:normal;transform-origin:100% 50%;transform:scaleX(0.94)">0.0</div>
<div class="t" style="left:-106px;width:400px;text-align:right;top:233.30px;font-size:13px;line-height:15.6px;font-weight:normal;color:#262626;font-style:normal;transform-origin:100% 50%;transform:scaleX(0.94)">0.0<span style="margin-left:3px">%</span></div>
<div class="t" style="left:120px;width:400px;text-align:right;top:233.30px;font-size:13px;line-height:15.6px;font-weight:normal;color:#262626;font-style:normal;transform-origin:100% 50%;transform:scaleX(0.94)">108</div>
<div class="t" style="left:198px;width:400px;text-align:right;top:233.30px;font-size:13px;line-height:15.6px;font-weight:normal;color:#262626;font-style:normal;transform-origin:100% 50%;transform:scaleX(0.94)">100.0<span style="margin-left:3px">%</span></div>
<div class="t" style="left:424px;width:400px;text-align:right;top:233.30px;font-size:13px;line-height:15.6px;font-weight:normal;color:#262626;font-style:normal;transform-origin:100% 50%;transform:scaleX(0.94)">0</div>
<div class="t" style="left:482px;width:400px;text-align:right;top:233.30px;font-size:13px;line-height:15.6px;font-weight:normal;color:#262626;font-style:normal;transform-origin:100% 50%;transform:scaleX(0.94)">0.0<span style="margin-left:3px">%</span></div>
<div class="t" style="left:708px;width:400px;text-align:right;top:233.30px;font-size:13px;line-height:15.6px;font-weight:normal;color:#262626;font-style:normal;transform-origin:100% 50%;transform:scaleX(0.94)">14</div>
<div class="t" style="left:776px;width:400px;text-align:right;top:233.30px;font-size:13px;line-height:15.6px;font-weight:normal;color:#262626;font-style:normal;transform-origin:100% 50%;transform:scaleX(0.94)">13.0<span style="margin-left:3px">%</span></div>
<div class="t" style="left:1016px;width:400px;text-align:right;top:233.30px;font-size:13px;line-height:15.6px;font-weight:normal;color:#262626;font-style:normal;transform-origin:100% 50%;transform:scaleX(0.94)">0</div>
<div class="t" style="left:7.5px;top:267.24px;font-size:12px;line-height:14.4px;font-weight:bold;color:#1a1a1a;font-style:italic;">Total</div>
<div class="t" style="left:-223px;width:400px;text-align:right;top:266.67px;font-size:12.6px;line-height:15.12px;font-weight:bold;color:#1a1a1a;font-style:italic;transform-origin:100% 50%;">538</div>
<div class="t" style="left:120px;width:400px;text-align:right;top:266.67px;font-size:12.6px;line-height:15.12px;font-weight:bold;color:#1a1a1a;font-style:italic;transform-origin:100% 50%;">538</div>
<div class="t" style="left:424px;width:400px;text-align:right;top:266.67px;font-size:12.6px;line-height:15.12px;font-weight:bold;color:#1a1a1a;font-style:italic;transform-origin:100% 50%;">3</div>
<div class="t" style="left:708px;width:400px;text-align:right;top:266.67px;font-size:12.6px;line-height:15.12px;font-weight:bold;color:#1a1a1a;font-style:italic;transform-origin:100% 50%;">86</div>
</div>
<div class="r" style="left:1735px;top:693px;width:1px;height:291px;background:#e1e1e1;"></div>
<div class="r" style="left:22px;top:983px;width:1714px;height:1px;background:#e1e1e1;"></div>
<div class="t" style="left:30.3px;top:1001.75px;font-size:14px;line-height:16.8px;font-weight:normal;color:#222;font-style:normal;">Record Count: 7</div>
<div class="t" style="left:22.7px;top:1135.72px;font-size:11.6px;line-height:13.92px;font-weight:bold;color:#222;font-style:normal;">21 Records</div>
<div class="r" style="left:869px;top:507px;width:859px;height:97px;overflow:hidden;">
<div class="r" style="left:0px;top:0px;width:376px;height:32px;background:#f6f6f6;"></div>
<div class="r" style="left:0px;top:0px;width:859px;height:1px;background:#e1e1e1;"></div>
<div class="r" style="left:0px;top:32px;width:376px;height:1px;background:#e1e1e1;"></div>
<div class="r" style="left:0px;top:33px;width:375px;height:31px;background:#e4f2dc;"></div>
<div class="r" style="left:0px;top:64px;width:376px;height:1px;background:#d0dfc6;"></div>
<div class="r" style="left:0px;top:96px;width:376px;height:1px;background:#e1e1e1;"></div>
<div class="r" style="left:94px;top:0px;width:1px;height:97px;background:#e1e1e1;"></div>
<div class="r" style="left:214px;top:0px;width:1px;height:97px;background:#e1e1e1;"></div>
<div class="r" style="left:375px;top:0px;width:1px;height:97px;background:#e1e1e1;"></div>
<div class="r" style="left:94px;top:33px;width:1px;height:31px;background:#d0dfc6;"></div>
<div class="r" style="left:214px;top:33px;width:1px;height:31px;background:#d0dfc6;"></div>
<div class="r" style="left:375px;top:33px;width:1px;height:31px;background:#d0dfc6;"></div>
<div class="r" style="left:0px;top:0px;width:1px;height:97px;background:#e1e1e1;"></div>
<div class="t" style="left:13px;top:10.14px;font-size:12px;line-height:14.4px;font-weight:normal;color:#262626;font-style:normal;">Interval</div>
<div class="t" style="left:-198px;width:400px;text-align:right;top:10.14px;font-size:12px;line-height:14.4px;font-weight:normal;color:#262626;font-style:normal;transform-origin:100% 50%;">Incident Count</div>
<div class="t" style="left:-37px;width:400px;text-align:right;top:10.14px;font-size:12px;line-height:14.4px;font-weight:normal;color:#262626;font-style:normal;transform-origin:100% 50%;">Incidents per Interval</div>
<svg style="left:74px;top:13.8px" width="11" height="6" viewBox="0 0 11 6"><path d="M0 6L5.5 0L11 6Z" fill="#8c8c8c"/></svg>
<div class="t" style="left:7px;top:41.30px;font-size:13px;line-height:15.6px;font-weight:normal;color:#262626;font-style:normal;letter-spacing:0.43px">2022/07/13</div>
<div class="t" style="left:-192px;width:400px;text-align:right;top:41.30px;font-size:13px;line-height:15.6px;font-weight:normal;color:#262626;font-style:normal;transform-origin:100% 50%;transform:scaleX(0.94)">76</div>
<div class="t" style="left:-31px;width:400px;text-align:right;top:41.30px;font-size:13px;line-height:15.6px;font-weight:normal;color:#262626;font-style:normal;transform-origin:100% 50%;transform:scaleX(0.94)">76</div>
<div class="t" style="left:7px;top:73.30px;font-size:13px;line-height:15.6px;font-weight:normal;color:#262626;font-style:normal;letter-spacing:0.43px">2022/07/14</div>
<div class="t" style="left:-192px;width:400px;text-align:right;top:73.30px;font-size:13px;line-height:15.6px;font-weight:normal;color:#262626;font-style:normal;transform-origin:100% 50%;transform:scaleX(0.94)">111</div>
<div class="t" style="left:-31px;width:400px;text-align:right;top:73.30px;font-size:13px;line-height:15.6px;font-weight:normal;color:#262626;font-style:normal;transform-origin:100% 50%;transform:scaleX(0.94)">111</div>
</div>
<div class="r" style="left:1727px;top:507px;width:1px;height:97px;background:#e1e1e1;"></div>
<svg style="left:0;top:0" width="1763" height="1143">
<line x1="1011.4" y1="200" x2="1011.4" y2="462" stroke="#e6e6e6" stroke-width="1"/>
<line x1="1073.4" y1="200" x2="1073.4" y2="462" stroke="#e6e6e6" stroke-width="1"/>
<line x1="1135.3" y1="200" x2="1135.3" y2="462" stroke="#e6e6e6" stroke-width="1"/>
<line x1="1197.3" y1="200" x2="1197.3" y2="462" stroke="#e6e6e6" stroke-width="1"/>
<line x1="1259.2" y1="200" x2="1259.2" y2="462" stroke="#e6e6e6" stroke-width="1"/>
<line x1="1321.1" y1="200" x2="1321.1" y2="462" stroke="#e6e6e6" stroke-width="1"/>
<line x1="1383.1" y1="200" x2="1383.1" y2="462" stroke="#e6e6e6" stroke-width="1"/>
<rect x="950" y="208.0" width="234.8" height="21" fill="#255c64"/>
<rect x="950" y="245.5" width="343.0" height="21" fill="#255c64"/>
<rect x="950" y="283.0" width="327.5" height="21" fill="#255c64"/>
<rect x="950" y="320.5" width="30.9" height="21" fill="#255c64"/>
<rect x="950" y="358.0" width="68.0" height="21" fill="#255c64"/>
<rect x="950" y="395.5" width="330.6" height="21" fill="#255c64"/>
<rect x="950" y="433.0" width="370.8" height="21" fill="#255c64"/>
<line x1="949.5" y1="200" x2="949.5" y2="462.5" stroke="#8a8a8a" stroke-width="1"/>
<rect x="1411" y="327" width="10" height="10" fill="#255c64"/>
</svg>
<div class="t" style="right:820px;top:213.37px;font-size:8.7px;line-height:10.44px;font-weight:normal;color:#666;font-style:normal;">2022/07/13</div>
<div class="t" style="right:820px;top:250.87px;font-size:8.7px;line-height:10.44px;font-weight:normal;color:#666;font-style:normal;">2022/07/14</div>
<div class="t" style="right:820px;top:288.37px;font-size:8.7px;line-height:10.44px;font-weight:normal;color:#666;font-style:normal;">2022/07/15</div>
<div class="t" style="right:820px;top:325.87px;font-size:8.7px;line-height:10.44px;font-weight:normal;color:#666;font-style:normal;">2022/07/16</div>
<div class="t" style="right:820px;top:363.37px;font-size:8.7px;line-height:10.44px;font-weight:normal;color:#666;font-style:normal;">2022/07/17</div>
<div class="t" style="right:820px;top:400.87px;font-size:8.7px;line-height:10.44px;font-weight:normal;color:#666;font-style:normal;">2022/07/18</div>
<div class="t" style="right:820px;top:438.37px;font-size:8.7px;line-height:10.44px;font-weight:normal;color:#666;font-style:normal;">2022/07/19</div>
<div class="t" style="left:649.5px;width:600px;text-align:center;top:468.87px;font-size:8.7px;line-height:10.44px;font-weight:normal;color:#666;font-style:normal;">0</div>
<div class="t" style="left:711.44px;width:600px;text-align:center;top:468.87px;font-size:8.7px;line-height:10.44px;font-weight:normal;color:#666;font-style:normal;">20</div>
<div class="t" style="left:773.3800000000001px;width:600px;text-align:center;top:468.87px;font-size:8.7px;line-height:10.44px;font-weight:normal;color:#666;font-style:normal;">40</div>
<div class="t" style="left:835.3199999999999px;width:600px;text-align:center;top:468.87px;font-size:8.7px;line-height:10.44px;font-weight:normal;color:#666;font-style:normal;">60</div>
<div class="t" style="left:897.26px;width:600px;text-align:center;top:468.87px;font-size:8.7px;line-height:10.44px;font-weight:normal;color:#666;font-style:normal;">80</div>
<div class="t" style="left:959.2px;width:600px;text-align:center;top:468.87px;font-size:8.7px;line-height:10.44px;font-weight:normal;color:#666;font-style:normal;">100</div>
<div class="t" style="left:1021.1399999999999px;width:600px;text-align:center;top:468.87px;font-size:8.7px;line-height:10.44px;font-weight:normal;color:#666;font-style:normal;">120</div>
<div class="t" style="left:1083.08px;width:600px;text-align:center;top:468.87px;font-size:8.7px;line-height:10.44px;font-weight:normal;color:#666;font-style:normal;">140</div>
<div class="t" style="left:1425px;top:327.43px;font-size:8px;line-height:9.6px;font-weight:normal;color:#333;font-style:normal;">Incident Count</div>
<div class="r" style="left:1605px;top:131px;width:146px;height:244px;background:#fff;border:1px solid #c9d2dc;box-sizing:border-box;box-shadow:1px 2px 4px rgba(0,0,0,0.25);"></div>
<div class="r" style="left:1606px;top:285px;width:144px;height:1px;background:#c9d2dc;"></div>
<div class="r" style="left:1606px;top:316px;width:144px;height:1px;background:#c9d2dc;"></div>
<div class="r" style="left:1606px;top:347px;width:144px;height:27px;background:#d9d9d9;"></div>
<div class="t" style="left:1640.2px;top:138.24px;font-size:12px;line-height:14.4px;font-weight:normal;color:#222;font-style:normal;">Bookmark</div>
<div class="t" style="left:1640.2px;top:164.44px;font-size:12px;line-height:14.4px;font-weight:normal;color:#222;font-style:normal;">Sort</div>
<div class="t" style="left:1640.2px;top:190.24px;font-size:12px;line-height:14.4px;font-weight:normal;color:#222;font-style:normal;">Manage Columns</div>
<div class="t" style="left:1640.2px;top:216.34px;font-size:12px;line-height:14.4px;font-weight:normal;color:#222;font-style:normal;">Rollup</div>
<div class="t" style="left:1640.2px;top:242.24px;font-size:12px;line-height:14.4px;font-weight:normal;color:#222;font-style:normal;">Slice</div>
<div class="t" style="left:1640.2px;top:268.34px;font-size:12px;line-height:14.4px;font-weight:normal;color:#222;font-style:normal;">Auto Filter</div>
<div class="t" style="left:1640.2px;top:294.14px;font-size:12px;line-height:14.4px;font-weight:normal;color:#222;font-style:normal;">Forward</div>
<div class="t" style="left:1640.2px;top:325.24px;font-size:12px;line-height:14.4px;font-weight:normal;color:#222;font-style:normal;">Export</div>
<div class="t" style="left:1640.2px;top:355.04px;font-size:12px;line-height:14.4px;font-weight:normal;color:#5ea4dc;font-style:normal;">Print</div>
<svg style="left:1736px;top:295.5px" width="6" height="10" viewBox="0 0 6 10"><path d="M0.5 0.5L5.5 5L0.5 9.5Z" fill="#111"/></svg>
<svg style="left:1736px;top:326.6px" width="6" height="10" viewBox="0 0 6 10"><path d="M0.5 0.5L5.5 5L0.5 9.5Z" fill="#111"/></svg>
<svg style="left:1619px;top:137px" width="12" height="14" viewBox="0 0 12 14"><path d="M1 1H11V12.5L6 9L1 12.5Z" fill="none" stroke="#161616" stroke-width="1.2"/></svg>
<svg style="left:1618px;top:163px" width="14" height="14" viewBox="0 0 14 14"><path d="M3.5 13V1.5M0.8 4.3L3.5 1.5L6.2 4.3M9.5 1V12.5M6.8 9.7L9.5 12.5L12.2 9.7" fill="none" stroke="#161616" stroke-width="1.2"/></svg>
<svg style="left:1618px;top:189px" width="14" height="14" viewBox="0 0 14 14"><path d="M4.5 1H1V13H4.5M9.5 1H13V13H9.5" fill="none" stroke="#161616" stroke-width="1.3"/><path d="M4 5.5H10M8.3 4L10 5.5L8.3 7M10 8.5H4M5.7 7L4 8.5L5.7 10" fill="none" stroke="#161616" stroke-width="1.1"/></svg>
<svg style="left:1618px;top:214.5px" width="15" height="15" viewBox="0 0 15 15"><path d="M1 1H13.2V4.8H1ZM3.6 4.8V9H13.2V4.8M6.1 9V13.4H13.2V9" fill="none" stroke="#222" stroke-width="1.15"/></svg>
<svg style="left:1618px;top:241px" width="14" height="14" viewBox="0 0 14 14"><path d="M1 8V13H6M8 1H13V6" fill="none" stroke="#161616" stroke-width="1.2"/><path d="M3 3L11 11" stroke="#444" stroke-width="1.4" stroke-dasharray="1.3 1.6"/></svg>
<svg style="left:1618px;top:266px" width="14" height="14" viewBox="0 0 14 14"><rect x="1.5" y="1.5" width="11" height="11" rx="1.2" fill="none" stroke="#333" stroke-width="1.2"/></svg>
<svg style="left:1617px;top:294px" width="15" height="13" viewBox="0 0 15 13"><path d="M1 9.2V6.8H12.6M8.3 1.6L12.9 6.6L8.3 11.2" fill="none" stroke="#3a3a3a" stroke-width="1.3"/></svg>
<svg style="left:1617px;top:324px" width="15" height="15" viewBox="0 0 15 15"><path d="M1.2 1.2H13.2V13.2H1.2Z" fill="none" stroke="#555" stroke-width="1.3"/><path d="M1.8 12.6L10.3 4.3M5.6 4.3H10.6V9.2" fill="none" stroke="#161616" stroke-width="1.2"/></svg>
<svg style="left:1618px;top:354px" width="14" height="14" viewBox="0 0 14 14"><path d="M3.5 4.5V1H10.5V4.5M3.5 10.5H1.2V4.5H12.8V10.5H10.5" fill="none" stroke="#161616" stroke-width="1.3" stroke-linejoin="round"/><rect x="3.5" y="8" width="7" height="5" fill="none" stroke="#161616" stroke-width="1.3"/></svg>
<div class="r" style="left:1663px;top:381px;width:110px;height:25px;background:#fff;border:1px solid #333;box-sizing:border-box;"></div>
<div class="t" style="left:1671px;top:386.64px;font-size:12px;line-height:14.4px;font-weight:normal;color:#333;font-style:normal;">Displays the report</div>
</body></html>
